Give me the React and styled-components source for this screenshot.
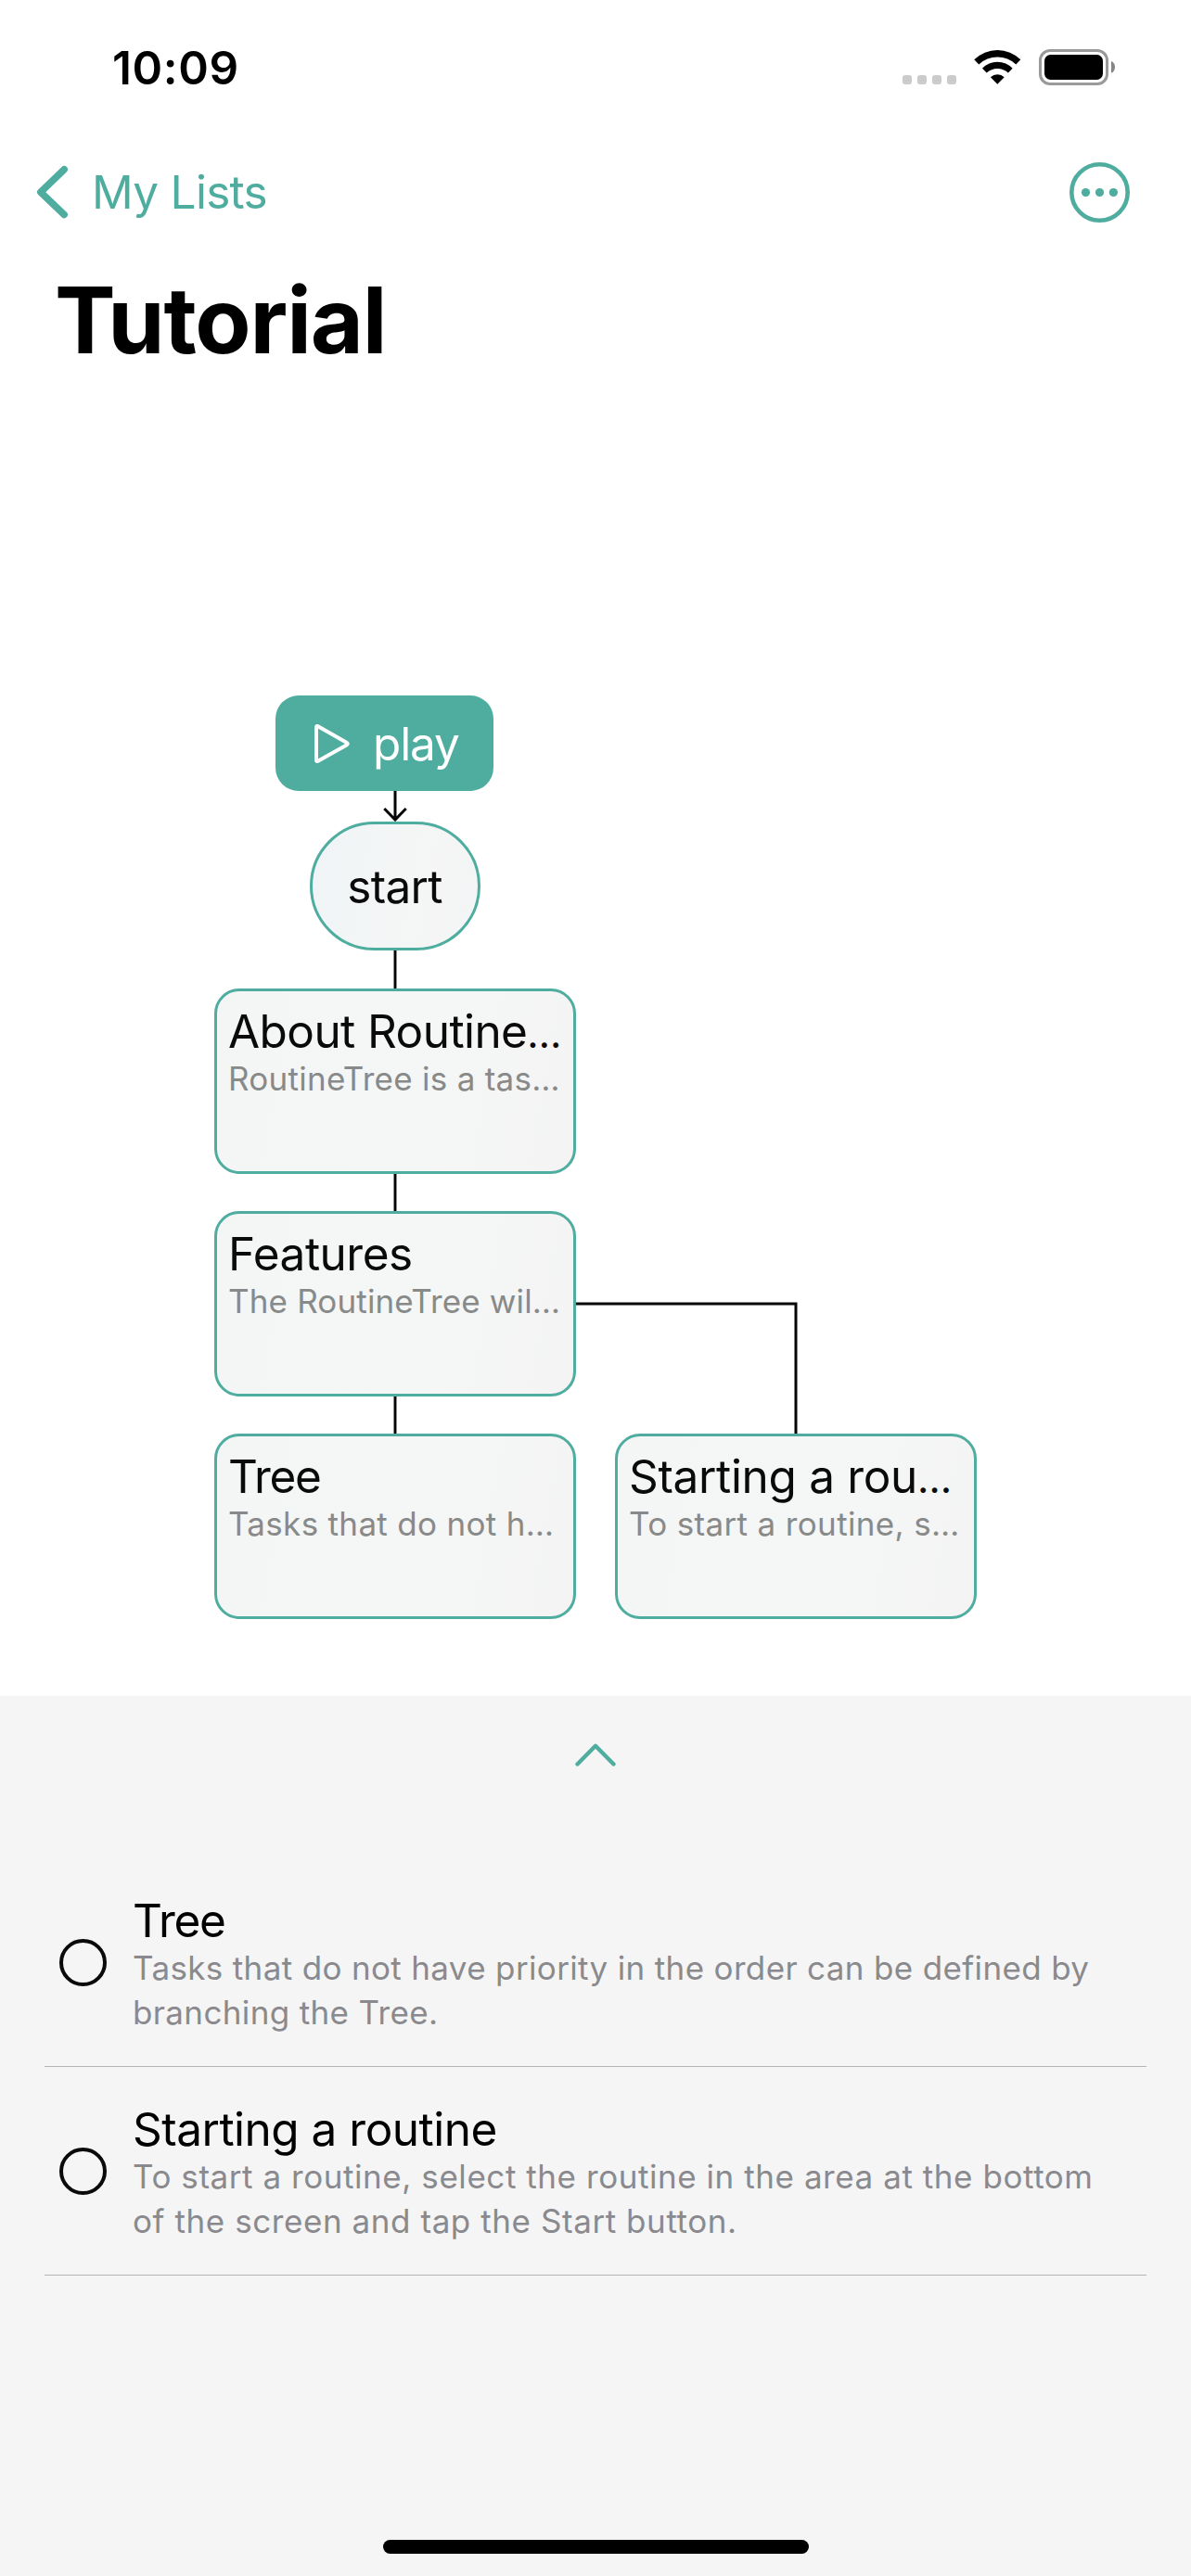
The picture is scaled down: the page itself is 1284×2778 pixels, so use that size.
import React from "react";
import styled, { createGlobalStyle } from "styled-components";

const TEAL = "#4fad9f";
const INK = "#0a0a0a";

const GlobalStyle = createGlobalStyle`
  html, body { margin: 0; padding: 0; background: #fff; }
  * { box-sizing: border-box; }
  svg { display: block; flex: none; }
`;

const Screen = styled.main`
  width: 1284px;
  height: 2778px;
  display: flex;
  flex-direction: column;
  background: #fff;
  color: #000;
  font-family: Inter, "Liberation Sans", sans-serif;
  overflow: hidden;
`;

const Text = styled.span`
  display: block;
  white-space: nowrap;
  font-size: 49.5px;
  line-height: 60px;
  letter-spacing: ${(p) => p.$track || 0}px;
`;

/* ---------- header ---------- */

const StatusBar = styled.header`
  height: 146px;
  flex: none;
  display: flex;
  align-items: center;
  justify-content: space-between;
  padding: 0 82px 0 121px;
`;

const Clock = styled(Text)`
  font-weight: 600;
`;

const StatusIcons = styled.div`
  display: flex;
  align-items: center;
  height: 39px;
  margin-bottom: 1px;
`;

const SignalDots = styled.div`
  display: flex;
  gap: 6px;
  align-self: flex-end;
  margin: 0 19px 1px 0;
`;

const SignalDot = styled.i`
  width: 10px;
  height: 10px;
  border-radius: 3px;
  background: #cbcbcb;
`;

const BatterySlot = styled.div`
  margin-left: 19px;
`;

const NavBar = styled.nav`
  height: 122px;
  flex: none;
  display: flex;
  align-items: center;
  justify-content: space-between;
  padding: 0 66px 0 39px;
  color: ${TEAL};
`;

const BackLink = styled.div`
  display: flex;
  align-items: center;
  gap: 25px;
`;

const Title = styled.h1`
  margin: 18px 0 -1px 59px;
  font-size: 98.5px;
  line-height: 120px;
  font-weight: 700;
  letter-spacing: -1.2px;
`;

/* ---------- tree ---------- */

const Canvas = styled.section`
  flex: 1;
  display: flex;
  align-items: flex-start;
  gap: 42px;
  padding: 345px 0 0 231px;
`;

const Column = styled.div`
  width: 390px;
  display: flex;
  flex-direction: column;
  align-items: center;
`;

const BranchColumn = styled(Column)`
  position: relative;
  margin-top: 796px;
`;

const PlayButton = styled.button`
  align-self: flex-start;
  margin: 0 0 0 66px;
  width: 235px;
  height: 103px;
  border: 0;
  border-radius: 25px;
  padding: 0 0 0 42px;
  display: flex;
  align-items: center;
  gap: 25px;
  background: ${TEAL};
  color: #fff;
  font-family: inherit;
`;

const StartNode = styled.div`
  width: 184px;
  height: 139px;
  border: 3px solid ${TEAL};
  border-radius: 70px;
  display: flex;
  align-items: center;
  justify-content: center;
  padding-right: 1px;
  color: ${INK};
  background: linear-gradient(100deg, #f0f4f6 0%, #f4f6f6 50%, #f5f5f5 75%, #f2f5f6 100%);
`;

const Connector = styled.div`
  width: 4px;
  height: ${(p) => p.$h}px;
  background: linear-gradient(90deg, #8a8a8a 1px, #050505 1px, #050505 3px, #8a8a8a 3px);
`;

const Elbow = styled.svg`
  position: absolute;
  left: -42px;
  top: -143px;
`;

const Card = styled.article`
  width: 390px;
  height: 200px;
  border: 3px solid ${TEAL};
  border-radius: 27px;
  padding: 13px 12px 0;
  color: ${INK};
  background: linear-gradient(100deg, #f4f6f6 0%, #f5f6f6 60%, #f4f4f4 100%);
`;

const CardNote = styled(Text)`
  font-size: 35px;
  line-height: 42px;
  color: #888a89;
`;

const Ellipsis = styled.span`
  font-size: 43px;
  line-height: 1;
`;

/* ---------- bottom sheet ---------- */

const Sheet = styled.section`
  height: 949px;
  flex: none;
  display: flex;
  flex-direction: column;
  align-items: center;
  background: #f5f5f5;
  padding: 51px 48px 24px;
`;

const TaskList = styled.ul`
  list-style: none;
  margin: 99px 0 auto;
  padding: 0;
  width: 1188px;
`;

const TaskRow = styled.li`
  height: 225px;
  display: flex;
  align-items: center;
  gap: 28px;
  padding-left: 16px;
  border-bottom: 1px solid #b4b4b4;
`;

const Check = styled.i`
  flex: none;
  width: 51px;
  height: 51px;
  border: 4px solid ${INK};
  border-radius: 50%;
`;

const TaskBody = styled.div`
  padding-top: 5px;
`;

const TaskName = styled(Text)`
  line-height: 54px;
`;

const TaskNote = styled(Text)`
  font-size: 35px;
  line-height: 48px;
  color: #8a8a8e;
`;

const HomeIndicator = styled.div`
  width: 459px;
  height: 15px;
  border-radius: 8px;
  background: #000;
`;

/* ---------- icons ---------- */

const WifiIcon = () => (
  <svg width="51" height="37" viewBox="0 0 51 37">
    <path d="M0.3 10.3A35.5 35.5 0 0 1 50.3 10.3L45.3 15.4A29 29 0 0 0 5.3 15.4Z" />
    <path d="M9 19.7A22.5 22.5 0 0 1 41.6 19.7L36.9 24.6A17 17 0 0 0 13.7 24.6Z" />
    <path d="M17.9 29.2A10.5 10.5 0 0 1 32.7 29.2L25.3 36.8Z" />
  </svg>
);

const BatteryIcon = () => (
  <svg width="82" height="39" viewBox="0 0 82 39">
    <rect x="1.5" y="1.5" width="72" height="36" rx="10.5" fill="none" stroke="#9a9a9a" strokeWidth="3" />
    <rect x="6" y="6" width="63" height="27" rx="6.5" />
    <path d="M78 13C80.8 14 82 16.4 82 19.3C82 22.2 80.8 24.8 78 25.8Z" fill="#858585" />
  </svg>
);

const BackIcon = () => (
  <svg width="35" height="58" viewBox="0 0 35 58" fill="none" stroke={TEAL} strokeWidth="7.5" strokeLinecap="round" strokeLinejoin="round">
    <path d="M30.2 4.7L4.8 29.2L30.2 53.5" />
  </svg>
);

const MoreIcon = () => (
  <svg width="65" height="65" viewBox="0 0 65 65" fill={TEAL}>
    <circle cx="32.5" cy="32.5" r="30.2" fill="none" stroke={TEAL} strokeWidth="4.6" />
    <circle cx="17.5" cy="32.5" r="4.6" />
    <circle cx="32.5" cy="32.5" r="4.6" />
    <circle cx="47.4" cy="32.5" r="4.6" />
  </svg>
);

const PlayIcon = () => (
  <svg width="38" height="42" viewBox="0 0 38 42" fill="none" stroke="#fff" strokeWidth="4" strokeLinejoin="round">
    <path d="M2 3.2C2 2 2.8 1.7 3.8 2.2L34.6 19.8C36.2 20.7 36.2 21.5 34.6 22.4L3.8 39.8C2.8 40.3 2 40 2 38.8Z" />
  </svg>
);

const ArrowDown = () => (
  <svg width="26" height="33" viewBox="0 0 26 33" fill="none" stroke="#050505" strokeWidth="3">
    <path d="M13 0V32M1.3 19L13 31L24.7 19" />
  </svg>
);

const ChevronUp = () => (
  <svg width="44" height="25" viewBox="0 0 44 25" fill="none" stroke={TEAL} strokeWidth="4.4" strokeLinecap="round" strokeLinejoin="round">
    <path d="M2.5 22.5L22 2.8L41.5 22.5" />
  </svg>
);

/* ---------- data ---------- */

const mainCards = [
  { name: "About Routine", nameTrack: -0.58, clipped: true, note: "RoutineTree is a tas…", noteTrack: 0.27 },
  { name: "Features", nameTrack: -0.5, note: "The RoutineTree wil…", noteTrack: 0.15 },
  { name: "Tree", nameTrack: -1.27, note: "Tasks that do not h…", noteTrack: 0.32 },
];

const branchCard = { name: "Starting a rou", nameTrack: -0.33, clipped: true, note: "To start a routine, s…", noteTrack: 0.35 };

const tasks = [
  {
    name: "Tree",
    nameTrack: -1.27,
    lines: [
      { text: "Tasks that do not have priority in the order can be defined by", track: 0.35 },
      { text: "branching the Tree.", track: 0.36 },
    ],
  },
  {
    name: "Starting a routine",
    nameTrack: -0.5,
    lines: [
      { text: "To start a routine, select the routine in the area at the bottom", track: 0.56 },
      { text: "of the screen and tap the Start button.", track: 0.57 },
    ],
  },
];

const TaskCard = ({ card }) => (
  <Card>
    <Text $track={card.nameTrack}>
      {card.name}
      {card.clipped && <Ellipsis>…</Ellipsis>}
    </Text>
    <CardNote $track={card.noteTrack}>{card.note}</CardNote>
  </Card>
);

export default function App() {
  return (
    <Screen>
      <GlobalStyle />
      <StatusBar>
        <Clock $track={0.6}>10:09</Clock>
        <StatusIcons>
          <SignalDots>
            {[0, 1, 2, 3].map((n) => (
              <SignalDot key={n} />
            ))}
          </SignalDots>
          <WifiIcon />
          <BatterySlot>
            <BatteryIcon />
          </BatterySlot>
        </StatusIcons>
      </StatusBar>
      <NavBar>
        <BackLink>
          <BackIcon />
          <Text $track={-0.7}>My Lists</Text>
        </BackLink>
        <MoreIcon />
      </NavBar>
      <Title>Tutorial</Title>

      <Canvas>
        <Column>
          <PlayButton>
            <PlayIcon />
            <Text $track={-1.1}>play</Text>
          </PlayButton>
          <ArrowDown />
          <StartNode>
            <Text $track={-0.7}>start</Text>
          </StartNode>
          {mainCards.map((card, i) => (
            <React.Fragment key={card.name}>
              <Connector $h={i === 0 ? 41 : 40} />
              <TaskCard card={card} />
            </React.Fragment>
          ))}
        </Column>
        <BranchColumn>
          <Elbow width="240" height="143" viewBox="0 0 240 143" fill="none" stroke="#050505" strokeWidth="3">
            <path d="M0 3H237V143" />
          </Elbow>
          <TaskCard card={branchCard} />
        </BranchColumn>
      </Canvas>

      <Sheet>
        <ChevronUp />
        <TaskList>
          {tasks.map((task) => (
            <TaskRow key={task.name}>
              <Check />
              <TaskBody>
                <TaskName $track={task.nameTrack}>{task.name}</TaskName>
                {task.lines.map((line) => (
                  <TaskNote key={line.text} $track={line.track}>
                    {line.text}
                  </TaskNote>
                ))}
              </TaskBody>
            </TaskRow>
          ))}
        </TaskList>
        <HomeIndicator />
      </Sheet>
    </Screen>
  );
}
